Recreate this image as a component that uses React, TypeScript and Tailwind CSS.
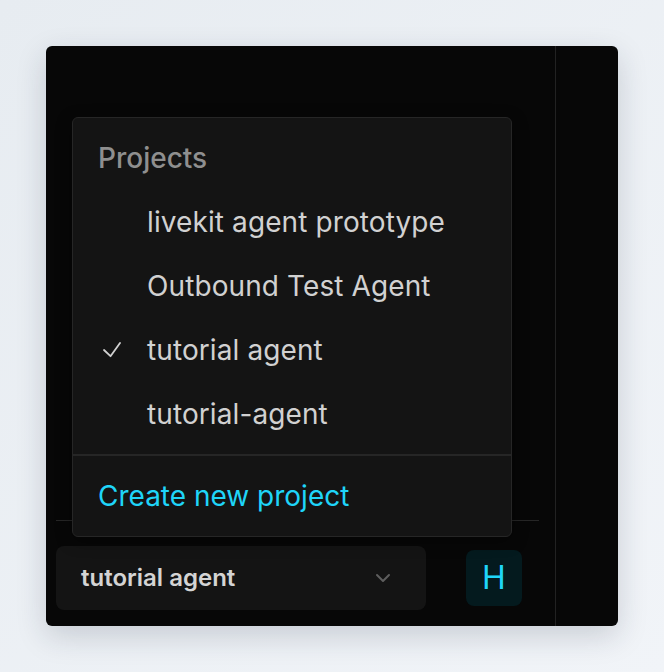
import React from "react";

const projects = [
  "livekit agent prototype",
  "Outbound Test Agent",
  "tutorial agent",
  "tutorial-agent",
];

function CheckMark() {
  return (
    <svg width="18" height="16" viewBox="0 0 18 16" fill="none" className="ml-[5px]">
      <path
        d="M1 8 L7.5 14.2 L17 1"
        stroke="#d1d1d1"
        strokeWidth="1.8"
        strokeLinecap="round"
        strokeLinejoin="round"
      />
    </svg>
  );
}

function Chevron() {
  return (
    <svg width="16" height="10" viewBox="0 0 16 10" fill="none">
      <path
        d="M2 2 L8 8 L14 2"
        stroke="#5e5e5e"
        strokeWidth="2"
        strokeLinecap="round"
        strokeLinejoin="round"
      />
    </svg>
  );
}

function ProjectMenu({ current }: { current: string }) {
  return (
    <div className="absolute left-[26px] top-[71px] w-[440px] rounded-[6px] border border-[#262626] bg-[#141414] shadow-[0_4px_16px_rgba(0,0,0,0.4)]">
      <div className="py-[8px]">
        <div className="flex h-[64px] items-center pl-[25px] text-[28px] font-medium leading-none text-[#8f8f8f]">
          Projects
        </div>
        {projects.map((p) => (
          <div
            key={p}
            className="flex h-[64px] items-center pl-[25px] text-[28px] leading-none tracking-[0.1px] text-[#d1d1d1]"
          >
            <span className="flex w-[49px] items-center">
              {p === current && <CheckMark />}
            </span>
            <span>{p}</span>
          </div>
        ))}
      </div>
      <div className="h-[2px] bg-[#262626]" />
      <div className="py-[8px]">
        <div className="flex h-[64px] items-center pl-[25px] text-[28px] leading-none text-[#1fd5f9]">
          Create new project
        </div>
      </div>
    </div>
  );
}

export default function App() {
  const current = "tutorial agent";
  return (
    <div
      className="flex h-[672px] w-[664px] bg-gradient-to-br from-[#e7ecf1] to-[#f1f4f8] p-[46px]"
      style={{ fontFamily: "Inter, 'Noto Sans', sans-serif" }}
    >
      <div className="flex flex-1 overflow-hidden rounded-[6px] bg-[#070707] shadow-[0_10px_30px_rgba(30,41,59,0.18)]">
        <div className="relative flex w-[510px] flex-col justify-end border-r border-[#222222]">
          <div className="ml-[10px] mr-[16px] h-px bg-[#262626]" />
          <div className="flex items-center pb-[16px] pl-[10px] pr-[33px] pt-[25px]">
            <button className="flex h-[64px] w-[370px] items-center justify-between rounded-[8px] bg-[#141414] pl-[25px] pr-[35px]">
              <span className="text-[24px] font-semibold leading-none text-[#d4d4d4]">
                {current}
              </span>
              <Chevron />
            </button>
            <div className="ml-auto flex h-[56px] w-[56px] items-center justify-center rounded-[8px] bg-[#041a1e] text-[32px] leading-none text-[#1fd5f9]">
              H
            </div>
          </div>
          <ProjectMenu current={current} />
        </div>
        <div className="flex-1" />
      </div>
    </div>
  );
}
